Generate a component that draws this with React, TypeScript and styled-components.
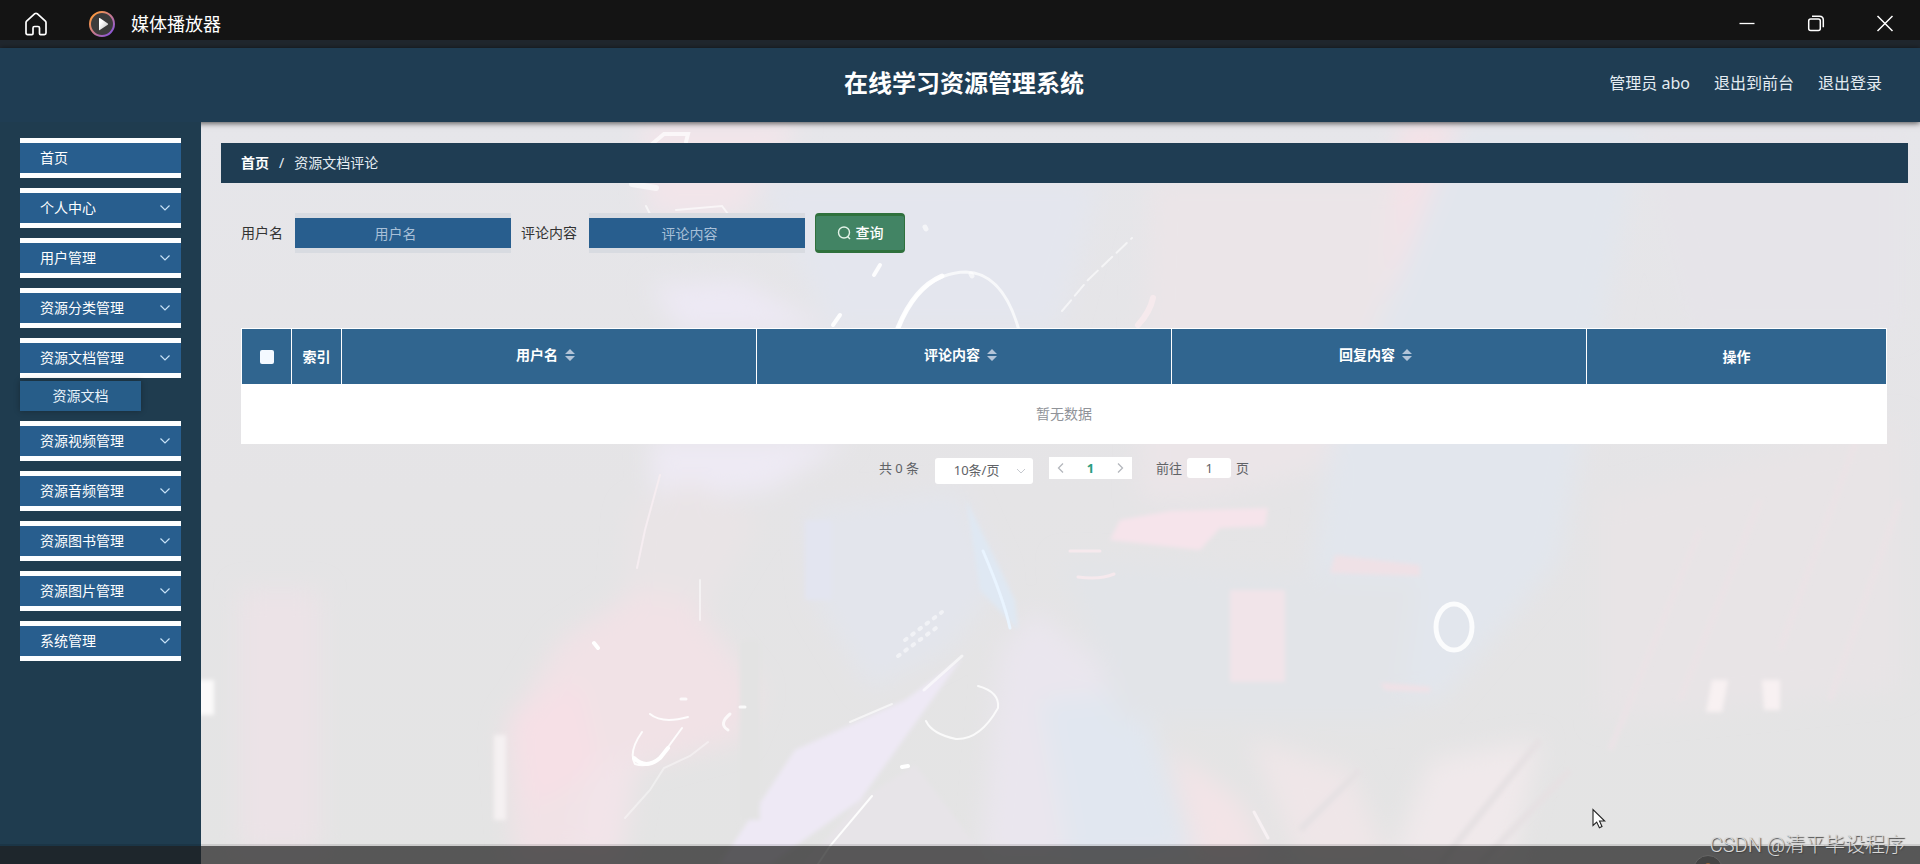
import React from "react";
import styled, { createGlobalStyle } from "styled-components";

const GlobalStyle = createGlobalStyle`
  *, *::before, *::after { box-sizing: border-box; }
  body {
    margin: 0;
    background: #e5e5e6;
    font-family: "Noto Sans", "Noto Sans CJK SC", sans-serif;
    font-size: 14px;
    line-height: 20px;
    color: #333;
  }
  button, input, select { font: inherit; margin: 0; }
`;

const Page = styled.div`
  position: relative;
  display: flex;
  flex-direction: column;
  min-height: 100vh;
  overflow: hidden;
`;

const TitleBar = styled.div`
  display: flex;
  align-items: center;
  height: 48px;
  padding: 0 24px;
  background: #141414;
  border-bottom: 8px solid #20272e;
  color: #fff;
`;

const AppName = styled.span`
  margin-left: 15px;
  font-size: 18px;
  line-height: 24px;
`;

const IconButton = styled.button`
  display: flex;
  padding: 0;
  border: 0;
  background: none;
  color: #fff;
`;

const TitleGroup = styled.div`
  display: flex;
  align-items: center;
  flex: 1;
  padding-top: 8px;
`;

const LogoSlot = styled.span`
  display: flex;
  margin-left: 40px;
`;

const TitleIcons = styled.div`
  display: flex;
  gap: 49px;
  padding: 7px 1px 0 0;
`;

const Header = styled.header`
  position: relative;
  z-index: 1;
  display: grid;
  grid-template-columns: 1fr auto 1fr;
  align-items: center;
  height: 74px;
  padding: 0 38px 4px 46px;
  background: #1f3d53;
  box-shadow: 0 1px 6px rgba(0, 0, 0, 0.7);
  color: #fff;
`;

const Title = styled.h1`
  grid-column: 2;
  margin: 0;
  font-size: 24px;
  line-height: 32px;
  font-weight: 700;
`;

const UserLinks = styled.div`
  display: flex;
  justify-content: flex-end;
  gap: 24px;
  font-size: 16px;
  line-height: 24px;
  color: #e4ecf2;
`;

const UserLink = styled.a`
  color: inherit;
  text-decoration: none;
`;

const Body = styled.div`
  display: flex;
  flex: 1;
`;

const Sidebar = styled.nav`
  position: relative;
  z-index: 2;
  width: 201px;
  flex: none;
  padding: 16px 20px;
  background: #1f3c4f;
`;

const Menu = styled.ul`
  display: flex;
  flex-direction: column;
  gap: 10px;
  margin: 0;
  padding: 0;
  list-style: none;
`;

const MenuButton = styled.button`
  display: flex;
  align-items: center;
  justify-content: space-between;
  width: 100%;
  height: 40px;
  padding: 0 10px 0 20px;
  border: solid #fdfeff;
  border-width: 5px 0;
  background: #285e8e;
  color: #fff;
  text-align: left;
`;

const SubMenuButton = styled.button`
  display: block;
  width: 121px;
  height: 30px;
  margin-top: 3px;
  padding: 0;
  border: 0;
  background: #275d89;
  box-shadow: 0 0 6px rgba(0, 0, 0, 0.3);
  color: #e8f2fa;
`;

const Content = styled.main`
  position: relative;
  flex: 1;
  min-width: 0;
  padding: 21px 12px 60px 20px;
`;

const Backdrop = styled.svg`
  position: absolute;
  inset: 0;
  width: 100%;
  height: 100%;
`;

const Foreground = styled.div`
  position: relative;
`;

const Breadcrumb = styled.div`
  display: flex;
  align-items: center;
  gap: 10px;
  height: 40px;
  padding: 0 20px;
  background: #1f3d53;
  color: #e6eef4;
`;

const Crumb = styled.a`
  color: #fff;
  font-weight: 700;
  text-decoration: none;
`;

const Panel = styled.div`
  padding: 30px 21px 0 20px;
`;

const SearchForm = styled.form`
  display: flex;
  align-items: center;
  gap: 10px;
  margin-bottom: 75px;
`;

const Field = styled.label`
  display: flex;
  align-items: center;
  gap: 12px;
`;

const SearchInput = styled.input`
  width: 216px;
  height: 40px;
  padding: 0 30px 0 15px;
  border: solid #d8dbe1;
  border-width: 5px 0;
  border-radius: 0;
  background: #285e8e;
  color: #fff;
  text-align: center;
  &::placeholder { color: #a9c0d8; opacity: 1; }
`;

const SearchButton = styled.button`
  display: flex;
  align-items: center;
  justify-content: center;
  gap: 5px;
  width: 90px;
  height: 40px;
  padding: 0;
  border: solid #2f713d;
  border-width: 3px 1px;
  border-radius: 4px;
  background: #428464;
  color: #fff;
  font-weight: 500;
`;

const DataTable = styled.table`
  width: 100%;
  table-layout: fixed;
  border-collapse: separate;
  border-spacing: 0;
  background: #fff;
`;

const HeadCell = styled.th<{ $width?: number }>`
  width: ${(p) => (p.$width ? `${p.$width}px` : "auto")};
  height: 56px;
  padding: 0;
  border: solid #fff;
  border-width: 1px 0 0 1px;
  background: #30658f;
  color: #fff;
  font-weight: 700;
  &:last-child { border-right: 1px solid #fff; }
`;

const HeadLabel = styled.span`
  display: flex;
  align-items: center;
  justify-content: center;
  padding-bottom: 4px;
`;

const SortIcon = styled.svg`
  width: 24px;
  height: 14px;
`;

const RowCheck = styled.input`
  appearance: none;
  display: block;
  width: 14px;
  height: 14px;
  margin: 0 auto;
  border-radius: 2px;
  background: #f4f9ff;
`;

const EmptyCell = styled.td`
  height: 60px;
  padding: 0;
  color: #909399;
  text-align: center;
`;

const Pagination = styled.div`
  display: flex;
  align-items: flex-start;
  justify-content: center;
  padding-top: 13px;
  font-size: 13px;
  line-height: 22px;
  color: #606266;
`;

const SizePicker = styled.span`
  position: relative;
  display: flex;
  margin: 1px 16px 0;
`;

const SizeSelect = styled.select`
  appearance: none;
  width: 98px;
  height: 26px;
  padding: 0 15px 2px 0;
  border: 0;
  border-radius: 3px;
  background: #fff;
  color: #606266;
  line-height: 20px;
  text-align: center;
  text-align-last: center;
`;

const SelectArrow = styled.svg`
  position: absolute;
  top: 9px;
  right: 7px;
  width: 10px;
  height: 8px;
  pointer-events: none;
`;

const Pager = styled.div`
  display: flex;
  align-items: center;
  justify-content: space-between;
  width: 83px;
  height: 22px;
  padding: 0 8px;
  background: #fff;
`;

const PagerButton = styled.button<{ $active?: boolean }>`
  display: flex;
  padding: 0;
  border: 0;
  background: none;
  color: ${(p) => (p.$active ? "#2a9d80" : "#b4b7bd")};
  font-weight: 700;
`;

const Jumper = styled.label`
  display: flex;
  gap: 5px;
  margin-left: 24px;
`;

const JumpInput = styled.input`
  width: 44px;
  height: 20px;
  margin-top: 1px;
  padding: 0;
  border: 0;
  border-radius: 3px;
  background: #fff;
  color: #606266;
  text-align: center;
`;

const ControlStrip = styled.div`
  position: absolute;
  z-index: 3;
  right: 0;
  bottom: 0;
  left: 0;
  height: 20px;
  overflow: hidden;
  border-top: 2px solid rgba(0, 0, 0, 0.1);
  background: rgba(30, 30, 30, 0.71);
  background-clip: padding-box;
`;

const SeekThumb = styled.span`
  position: absolute;
  top: 9px;
  right: 197px;
  width: 30px;
  height: 30px;
  border: 1px solid #656565;
  border-radius: 50%;
  background: radial-gradient(circle, #e08030 0 6px, #444 7px);
`;

const Watermark = styled.span`
  position: absolute;
  z-index: 4;
  right: 15px;
  bottom: 5px;
  font-family: Roboto, "Noto Sans CJK SC", sans-serif;
  font-size: 20px;
  line-height: 28px;
  font-weight: 300;
  color: #d9d9d9;
  text-shadow: 1px 1px 1px #444;
`;

const Pointer = styled.svg`
  position: absolute;
  z-index: 4;
  right: 314px;
  bottom: 35px;
  width: 14px;
  height: 21px;
`;

const menuItems: { name: string; children?: string[]; leaf?: boolean }[] = [
  { name: "首页", leaf: true },
  { name: "个人中心" },
  { name: "用户管理" },
  { name: "资源分类管理" },
  { name: "资源文档管理", children: ["资源文档"] },
  { name: "资源视频管理" },
  { name: "资源音频管理" },
  { name: "资源图书管理" },
  { name: "资源图片管理" },
  { name: "系统管理" },
];

const sortable = ["用户名", "评论内容", "回复内容"];

function ChevronDown() {
  return (
    <svg width="12" height="8" viewBox="0 0 12 8" fill="none" stroke="#c8e2f7" strokeWidth="1.2">
      <path d="M1.5 1.5 6 6l4.500-4.500" />
    </svg>
  );
}

function Chevron({ flip }: { flip?: boolean }) {
  return (
    <svg width="7" height="12" viewBox="0 0 7 12" fill="none" stroke="currentColor" strokeWidth="1.3">
      <path d={flip ? "M1 1.500 5.500 6 1 10.500" : "M6 1.500 1.500 6 6 10.500"} />
    </svg>
  );
}

function HomeIcon() {
  return (
    <svg width="24" height="24" viewBox="0 0 24 24" fill="none" stroke="#fff" strokeWidth="1.700" strokeLinejoin="round">
      <path d="M2 10.500Q2 9.700 2.600 9.100L10.800 1.700Q12 .8 13.200 1.700L21.400 9.100Q22 9.700 22 10.500V21Q22 22.600 20.400 22.600H16.500Q15.500 22.600 15.500 21.600V16Q15.500 14.500 14 14.500H10.500Q9 14.500 9 16V21.600Q9 22.600 8 22.600H3.600Q2 22.600 2 21Z" />
    </svg>
  );
}

function PlayerLogo() {
  return (
    <svg width="28" height="28" viewBox="0 0 28 28">
      <defs>
        <linearGradient id="ring" x1="0" y1="0" x2="1" y2="1">
          <stop offset="0.100" stopColor="#ff9a3c" />
          <stop offset="0.500" stopColor="#c77a8e" />
          <stop offset="0.900" stopColor="#8a55d8" />
        </linearGradient>
        <linearGradient id="tri" x1="0" y1="0" x2="1" y2="1">
          <stop offset="0.300" stopColor="#fff" />
          <stop offset="1" stopColor="#bbb" />
        </linearGradient>
      </defs>
      <circle cx="14" cy="14" r="12" fill="#3b3b3b" stroke="url(#ring)" strokeWidth="2" />
      <path d="M11 8.400v11.200q0 .9.800.4l8-5.300q.7-.6 0-1.200l-8-5.400q-.8-.5-.8.300Z" fill="url(#tri)" />
    </svg>
  );
}

function Artwork() {
  return (
    <Backdrop viewBox="201 122 1719 742" preserveAspectRatio="xMidYMid slice" aria-hidden="true">
      <defs>
        <filter id="soft" x="-20%" y="-20%" width="140%" height="140%">
          <feGaussianBlur stdDeviation="12" />
        </filter>
        <filter id="edge">
          <feGaussianBlur stdDeviation="2" />
        </filter>
        <linearGradient id="base" x1="0" y1="0" x2="0" y2="1">
          <stop offset="0" stopColor="#e6e6ea" />
          <stop offset="0.500" stopColor="#e5e4e6" />
          <stop offset="1" stopColor="#e4e4e4" />
        </linearGradient>
      </defs>
      <rect x="201" y="122" width="1719" height="742" fill="url(#base)" />
      <g filter="url(#soft)">
        <path d="M640 122H800L740 215H650Z" fill="#f2e5ea" />
        <path d="M760 180H1100L1060 330H830Z" fill="#e4e6ee" />
        <path d="M1150 180H1430V300L1390 450 1200 500H1140Z" fill="#ebe5e8" />
        <path d="M1400 122H1460L1430 330H1385Z" fill="#f4e2e7" />
        <path d="M1455 130H1640L1560 560 1440 700H1290L1330 450Z" fill="#e2e6ed" />
        <path d="M1640 130H1900V330H1690Z" fill="#e6e4e9" />
        <path d="M650 285 740 280 830 330H680Z" fill="#ede9f4" />
        <path d="M650 440H850L770 490 655 500Z" fill="#eeeaf4" />
        <path d="M630 510 690 480 760 520 700 620 620 640Z" fill="#e9e4e6" />
        <path d="M805 510 960 490 1000 580 950 650 870 690 815 600Z" fill="#e3e5ec" />
        <path d="M640 590 690 600 760 690 740 740 630 770 560 864H515L505 730 560 640Z" fill="#f1e2e6" />
        <path d="M510 715 580 680 600 770 530 810Z" fill="#f6e0e6" />
        <path d="M590 770 640 750 620 864H570Z" fill="#f2e4e9" />
        <path d="M1035 610 1110 670 1200 864H980L1000 650Z" fill="#eae6ee" />
        <path d="M1040 700 1140 690 1190 850 1070 864Z" fill="#e1e7f0" />
        <path d="M1170 750 1240 800 1270 864H1200Z" fill="#f3e4e7" />
        <path d="M1060 560 1420 580 1400 720 1120 720Z" fill="#e2e4e8" />
        <path d="M1250 740 1350 770 1390 864H1300Z" fill="#efe6e8" />
        <path d="M1430 760 1540 740 1510 864H1390Z" fill="#f0e9eb" />
        <path d="M1600 500 1900 420V690L1600 720Z" fill="#e8e4e6" />
        <path d="M240 590H320V850H240Z" fill="#ece3e7" />
      </g>
      <g filter="url(#edge)">
        <path d="M196 680H214V715H196Z" fill="#fbfafa" />
        <path d="M494 735H506V820H494Z" fill="#f5f1f2" />
        <path d="M1712 680H1728L1722 712H1706Z" fill="#f8f1f2" />
        <path d="M1762 680H1780V710H1764Z" fill="#f8f1f2" />
        <path d="M966 500 1015 600 1018 630 980 590Z" fill="#dfe8f3" />
        <path d="M1120 520 1170 511 1268 508 1265 526 1220 528 1200 550 1110 540Z" fill="#f6e4eb" />
        <path d="M1230 590H1285V682H1230Z" fill="#f1e4e9" />
        <path d="M1335 555 1420 565V576L1330 573Z" fill="#efe1e6" />
        <path d="M1380 683 1430 687V692L1385 690Z" fill="#f1e1e6" />
        <path d="M795 750 905 700 962 658 860 800 770 864H720Z" fill="#eee9f5" />
        <path d="M860 800 915 765 990 864H805Z" fill="#e7e4e8" />
        <path d="M805 520H832V600H805Z" fill="#e3e5f0" />
        <path d="M740 640H760V820H740Z" fill="#e3e3e3" />
        <path d="M1540 740 1440 864M1570 770 1480 864M1360 770 1300 830" stroke="#e6e1e3" strokeWidth="7" fill="none" />
        <path d="M1700 530 1610 750M1760 500 1680 700M1860 430 1780 650M1900 500 1830 700" stroke="#ebe3e6" strokeWidth="6" fill="none" />
      </g>
      <g fill="none" stroke="#fff" strokeLinecap="round">
        <path d="M652 144 664 134H688L686 142" strokeWidth="4" opacity=".7" />
        <path d="M646 206 654 222M676 210 722 206 728 214" strokeWidth="2" opacity=".6" />
        <path d="M632 184 656 188" strokeWidth="6" opacity=".6" />
        <path d="M896 334Q918 273 966 272 1004 273 1020 334" strokeWidth="3" opacity=".7" />
        <path d="M898 328Q914 288 942 276" strokeWidth="5" opacity=".9" />
        <path d="M874 275 880 265M833 325 840 315" strokeWidth="4" opacity=".9" />
        <path d="M1062 311 1088 280 1132 238" strokeWidth="2" strokeDasharray="14 6" opacity=".6" />
        <path d="M925 227 926 229M971 274 972 276" strokeWidth="5" opacity=".6" />
        <path d="M1138 325Q1150 312 1153 298" stroke="#f6eaed" strokeWidth="6" />
        <ellipse cx="1454" cy="627" rx="18" ry="23" strokeWidth="5" opacity=".85" />
        <path d="M660 475 645 530 637 568" stroke="#f6edf1" strokeWidth="2" />
        <path d="M700 580V620" strokeWidth="2" opacity=".5" />
        <path d="M650 714Q662 724 688 717M682 728 660 758Q648 768 635 764 628 752 642 732" strokeWidth="2" opacity=".9" />
        <path d="M634 758Q646 770 660 758L668 748" strokeWidth="4" />
        <path d="M730 714Q718 724 728 730M740 707H745M681 699H686" strokeWidth="3" opacity=".8" />
        <path d="M708 742 690 756 664 768 650 790 625 818" strokeWidth="2" opacity=".4" />
        <path d="M978 686Q1000 692 998 708 980 740 956 739 932 734 926 721" strokeWidth="2" opacity=".8" />
        <path d="M962 656 924 690" strokeWidth="3" opacity=".6" />
        <path d="M892 704 850 722" strokeWidth="2" opacity=".6" />
        <path d="M905 640 942 612M898 656 936 628" strokeWidth="4" strokeDasharray="2 7" opacity=".5" />
        <path d="M872 796 830 846 818 864" strokeWidth="2" opacity=".9" />
        <path d="M902 767 908 766M594 643 598 648" strokeWidth="4" />
        <path d="M983 551Q1004 600 1010 628" stroke="#e9f4ff" strokeWidth="3" />
        <path d="M1078 577Q1100 580 1114 574M1070 551H1100" stroke="#f6e9ed" strokeWidth="3" />
        <path d="M1254 812 1268 838" stroke="#f7f1f3" strokeWidth="3" />
      </g>
    </Backdrop>
  );
}

export default function App() {
  return (
    <>
      <GlobalStyle />
      <Page>
        <TitleBar>
          <TitleGroup>
            <IconButton aria-label="主页">
              <HomeIcon />
            </IconButton>
            <LogoSlot>
              <PlayerLogo />
            </LogoSlot>
            <AppName>媒体播放器</AppName>
          </TitleGroup>
          <TitleIcons>
            <IconButton aria-label="最小化">
              <svg width="20" height="20" viewBox="0 0 20 20" stroke="#fff" strokeWidth="1.300">
                <path d="M2.500 9.500h15" />
              </svg>
            </IconButton>
            <IconButton aria-label="还原">
              <svg width="20" height="20" viewBox="0 0 20 20" fill="none" stroke="#fff" strokeWidth="1.500">
                <rect x="2.700" y="5" width="11.600" height="11.600" rx="2" />
                <path d="M6 2.300h7.500q3.800 0 3.800 3.800V13.300" />
              </svg>
            </IconButton>
            <IconButton aria-label="关闭">
              <svg width="20" height="20" viewBox="0 0 20 20" stroke="#fff" strokeWidth="1.500">
                <path d="M2.500 2 17.500 17M17.500 2 2.500 17" />
              </svg>
            </IconButton>
          </TitleIcons>
        </TitleBar>

        <Header>
          <Title>在线学习资源管理系统</Title>
          <UserLinks>
            <span>管理员 abo</span>
            <UserLink href="#front">退出到前台</UserLink>
            <UserLink href="#logout">退出登录</UserLink>
          </UserLinks>
        </Header>

        <Body>
          <Sidebar>
            <Menu>
              {menuItems.map((item) => (
                <li key={item.name}>
                  <MenuButton>
                    {item.name}
                    {!item.leaf && <ChevronDown />}
                  </MenuButton>
                  {item.children?.map((child) => (
                    <SubMenuButton key={child}>{child}</SubMenuButton>
                  ))}
                </li>
              ))}
            </Menu>
          </Sidebar>

          <Content>
            <Artwork />
            <Foreground>
              <Breadcrumb>
                <Crumb href="#home">首页</Crumb>
                <span>/</span>
                <span>资源文档评论</span>
              </Breadcrumb>
              <Panel>
                <SearchForm onSubmit={(e) => e.preventDefault()}>
                  <Field>
                    用户名
                    <SearchInput placeholder="用户名" />
                  </Field>
                  <Field>
                    评论内容
                    <SearchInput placeholder="评论内容" />
                  </Field>
                  <SearchButton type="submit">
                    <svg width="14" height="14" viewBox="0 0 14 14" fill="none" stroke="#e3f3e8" strokeWidth="1.400">
                      <circle cx="7" cy="6.500" r="5.500" />
                      <path d="M10.500 10.500 13 13" />
                    </svg>
                    查询
                  </SearchButton>
                </SearchForm>

                <DataTable>
                  <thead>
                    <tr>
                      <HeadCell $width={50}>
                        <RowCheck type="checkbox" aria-label="全选" />
                      </HeadCell>
                      <HeadCell $width={50}>索引</HeadCell>
                      {sortable.map((label) => (
                        <HeadCell key={label}>
                          <HeadLabel>
                            {label}
                            <SortIcon viewBox="0 0 24 14" fill="#b3c4d8">
                              <path d="M7 6 12 1l5 5ZM7 8l5 5 5-5Z" />
                            </SortIcon>
                          </HeadLabel>
                        </HeadCell>
                      ))}
                      <HeadCell $width={301}>操作</HeadCell>
                    </tr>
                  </thead>
                  <tbody>
                    <tr>
                      <EmptyCell colSpan={6}>暂无数据</EmptyCell>
                    </tr>
                  </tbody>
                </DataTable>

                <Pagination>
                  <span>共 0 条</span>
                  <SizePicker>
                    <SizeSelect aria-label="每页条数">
                      <option>10条/页</option>
                    </SizeSelect>
                    <SelectArrow viewBox="0 0 10 8" fill="none" stroke="#c6c9cf">
                      <path d="M1 2l4 4 4-4" />
                    </SelectArrow>
                  </SizePicker>
                  <Pager>
                    <PagerButton aria-label="上一页">
                      <Chevron />
                    </PagerButton>
                    <PagerButton $active>1</PagerButton>
                    <PagerButton aria-label="下一页">
                      <Chevron flip />
                    </PagerButton>
                  </Pager>
                  <Jumper>
                    前往
                    <JumpInput defaultValue="1" />
                    页
                  </Jumper>
                </Pagination>
              </Panel>
            </Foreground>
          </Content>
        </Body>

        <ControlStrip>
          <SeekThumb />
        </ControlStrip>
        <Watermark>CSDN @清平毕设程序</Watermark>
        <Pointer viewBox="0 0 14 21" fill="#fff" stroke="#222" strokeWidth="1.100">
          <path d="M1 1.500V17.500L4.700 14.100 7.400 19.700 10 18.500 7.500 13H12.700Z" />
        </Pointer>
      </Page>
    </>
  );
}
